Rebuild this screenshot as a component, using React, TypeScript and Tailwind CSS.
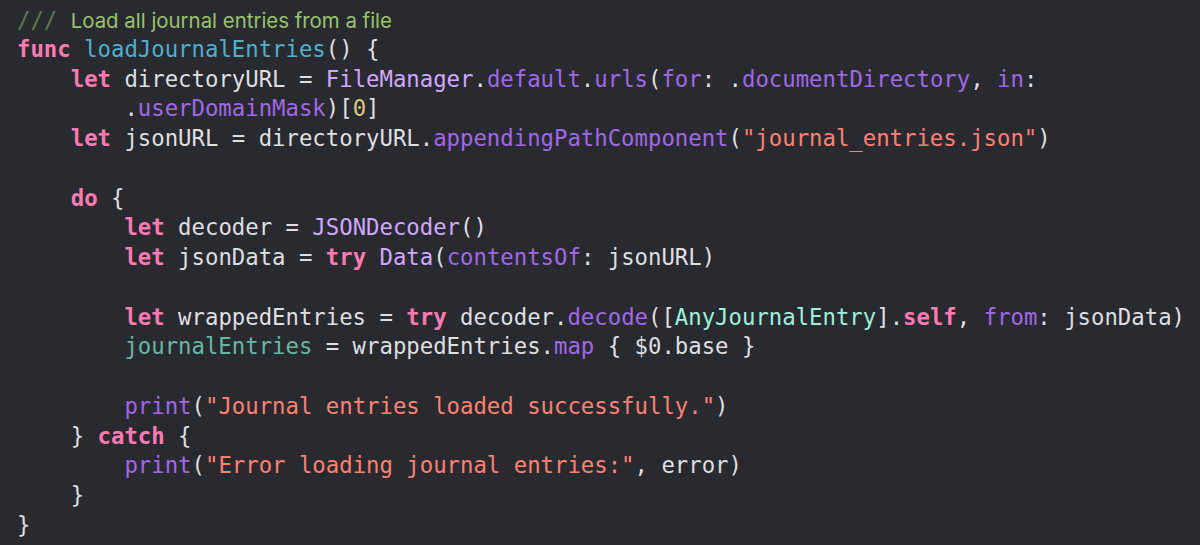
import React from "react";

type Seg = [string, string];

const P = "text-[#dfdfe0]";
const K = "text-[#ff7ab2] font-bold";
const S = "text-[#ff8170]";
const F = "text-[#a167e6]";
const C = "text-[#d0a8ff]";
const D = "text-[#4eb0cc]";
const T = "text-[#9ef1dd]";
const V = "text-[#67b7a4]";
const N = "text-[#d9c97c]";

const lines: Seg[][] = [
  [],
  [[K, "func"], [P, " "], [D, "loadJournalEntries"], [P, "() {"]],
  [[P, "    "], [K, "let"], [P, " directoryURL = "], [C, "FileManager"], [P, "."], [F, "default"], [P, "."], [F, "urls"], [P, "("], [F, "for"], [P, ": ."], [F, "documentDirectory"], [P, ", "], [F, "in"], [P, ":"]],
  [[P, "        ."], [F, "userDomainMask"], [P, ")["], [N, "0"], [P, "]"]],
  [[P, "    "], [K, "let"], [P, " jsonURL = directoryURL."], [F, "appendingPathComponent"], [P, "("], [S, "\"journal_entries.json\""], [P, ")"]],
  [],
  [[P, "    "], [K, "do"], [P, " {"]],
  [[P, "        "], [K, "let"], [P, " decoder = "], [C, "JSONDecoder"], [P, "()"]],
  [[P, "        "], [K, "let"], [P, " jsonData = "], [K, "try"], [P, " "], [C, "Data"], [P, "("], [F, "contentsOf"], [P, ": jsonURL)"]],
  [],
  [[P, "        "], [K, "let"], [P, " wrappedEntries = "], [K, "try"], [P, " decoder."], [F, "decode"], [P, "(["], [T, "AnyJournalEntry"], [P, "]."], [K, "self"], [P, ", "], [F, "from"], [P, ": jsonData)"]],
  [[P, "        "], [V, "journalEntries"], [P, " = wrappedEntries."], [F, "map"], [P, " { $0.base }"]],
  [],
  [[P, "        "], [F, "print"], [P, "("], [S, "\"Journal entries loaded successfully.\""], [P, ")"]],
  [[P, "    } "], [K, "catch"], [P, " {"]],
  [[P, "        "], [F, "print"], [P, "("], [S, "\"Error loading journal entries:\""], [P, ", error)"]],
  [[P, "    }"]],
  [[P, "}"]],
];

export default function App() {
  return (
    <div className="w-[1200px] h-[545px] overflow-hidden bg-[#292a30] pl-[17px] pt-[5px]">
      <div className="font-['DejaVu_Sans_Mono',monospace] text-[22.3px] leading-[29.75px] whitespace-pre">
        {lines.map((segs, i) => {
          if (i === 0) {
            return (
              <div key={i} className="h-[29.75px] flex items-center pt-[2px]">
                <span className="text-[#5b7a4b]">{"/// "}</span>
                <span className="font-['Inter',sans-serif] text-[20.4px] text-[#98c46a]">
                  Load all journal entries from a file
                </span>
              </div>
            );
          }
          return (
            <div key={i} className="h-[29.75px]">
              {segs.length === 0 ? " " : segs.map((s, j) => (
                <span key={j} className={s[0]}>{s[1]}</span>
              ))}
            </div>
          );
        })}
      </div>
    </div>
  );
}
